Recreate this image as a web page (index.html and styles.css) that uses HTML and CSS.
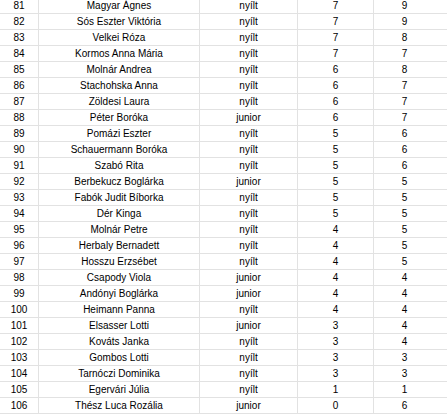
FILE: index.html
```html
<!DOCTYPE html>
<html>
<head>
<meta charset="utf-8">
<link rel="stylesheet" href="styles.css">
</head>
<body>
<div class="sheet">
<div class="row"><div class="c">81</div><div class="c">Magyar Ágnes</div><div class="c">nyílt</div><div class="c">7</div><div class="c last">9</div></div>
<div class="row"><div class="c">82</div><div class="c">Sós Eszter Viktória</div><div class="c">nyílt</div><div class="c">7</div><div class="c last">9</div></div>
<div class="row"><div class="c">83</div><div class="c">Velkei Róza</div><div class="c">nyílt</div><div class="c">7</div><div class="c last">8</div></div>
<div class="row"><div class="c">84</div><div class="c">Kormos Anna Mária</div><div class="c">nyílt</div><div class="c">7</div><div class="c last">7</div></div>
<div class="row"><div class="c">85</div><div class="c">Molnár Andrea</div><div class="c">nyílt</div><div class="c">6</div><div class="c last">8</div></div>
<div class="row"><div class="c">86</div><div class="c">Stachohska Anna</div><div class="c">nyílt</div><div class="c">6</div><div class="c last">7</div></div>
<div class="row"><div class="c">87</div><div class="c">Zöldesi Laura</div><div class="c">nyílt</div><div class="c">6</div><div class="c last">7</div></div>
<div class="row"><div class="c">88</div><div class="c">Péter Boróka</div><div class="c">junior</div><div class="c">6</div><div class="c last">7</div></div>
<div class="row"><div class="c">89</div><div class="c">Pomázi Eszter</div><div class="c">nyílt</div><div class="c">5</div><div class="c last">6</div></div>
<div class="row"><div class="c">90</div><div class="c">Schauermann Boróka</div><div class="c">nyílt</div><div class="c">5</div><div class="c last">6</div></div>
<div class="row"><div class="c">91</div><div class="c">Szabó Rita</div><div class="c">nyílt</div><div class="c">5</div><div class="c last">6</div></div>
<div class="row"><div class="c">92</div><div class="c">Berbekucz Boglárka</div><div class="c">junior</div><div class="c">5</div><div class="c last">5</div></div>
<div class="row"><div class="c">93</div><div class="c">Fabók Judit Bíborka</div><div class="c">nyílt</div><div class="c">5</div><div class="c last">5</div></div>
<div class="row"><div class="c">94</div><div class="c">Dér Kinga</div><div class="c">nyílt</div><div class="c">5</div><div class="c last">5</div></div>
<div class="row"><div class="c">95</div><div class="c">Molnár Petre</div><div class="c">nyílt</div><div class="c">4</div><div class="c last">5</div></div>
<div class="row"><div class="c">96</div><div class="c">Herbaly Bernadett</div><div class="c">nyílt</div><div class="c">4</div><div class="c last">5</div></div>
<div class="row"><div class="c">97</div><div class="c">Hosszu Erzsébet</div><div class="c">nyílt</div><div class="c">4</div><div class="c last">5</div></div>
<div class="row"><div class="c">98</div><div class="c">Csapody Viola</div><div class="c">junior</div><div class="c">4</div><div class="c last">4</div></div>
<div class="row"><div class="c">99</div><div class="c">Andónyi Boglárka</div><div class="c">junior</div><div class="c">4</div><div class="c last">4</div></div>
<div class="row"><div class="c">100</div><div class="c">Heimann Panna</div><div class="c">nyílt</div><div class="c">4</div><div class="c last">4</div></div>
<div class="row"><div class="c">101</div><div class="c">Elsasser Lotti</div><div class="c">junior</div><div class="c">3</div><div class="c last">4</div></div>
<div class="row"><div class="c">102</div><div class="c">Kováts Janka</div><div class="c">nyílt</div><div class="c">3</div><div class="c last">4</div></div>
<div class="row"><div class="c">103</div><div class="c">Gombos Lotti</div><div class="c">nyílt</div><div class="c">3</div><div class="c last">3</div></div>
<div class="row"><div class="c">104</div><div class="c">Tarnóczi Dominika</div><div class="c">nyílt</div><div class="c">3</div><div class="c last">3</div></div>
<div class="row"><div class="c">105</div><div class="c">Egervári Júlia</div><div class="c">nyílt</div><div class="c">1</div><div class="c last">1</div></div>
<div class="row"><div class="c">106</div><div class="c">Thész Luca Rozália</div><div class="c">junior</div><div class="c">0</div><div class="c last">6</div></div>
</div>
</body>
</html>
```
FILE: styles.css
```css
html, body {
  margin: 0;
  padding: 0;
  background: #ffffff;
}
body {
  font-family: "Liberation Sans", Arial, sans-serif;
  font-size: 10px;
  color: #000000;
  overflow: hidden;
}
.sheet {
  margin-top: -2px;
  width: 447px;
}
.row {
  display: grid;
  grid-template-columns: 39px 161px 98px 76px 73px;
}
.c {
  box-sizing: border-box;
  height: 16px;
  line-height: 15px;
  border-bottom: 1px solid #e2e2e2;
  border-right: 1px solid #e2e2e2;
  text-align: center;
  white-space: nowrap;
  overflow: hidden;
}
.c.last {
  border-right: none;
  padding-right: 12px;
}
```
